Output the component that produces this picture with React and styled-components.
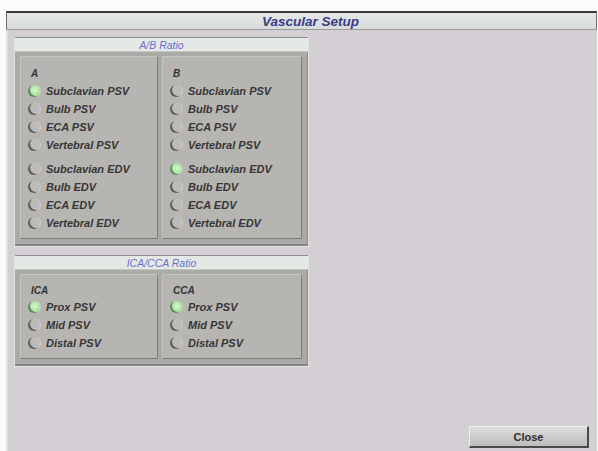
import React from 'react'
import styled, { createGlobalStyle } from 'styled-components'

const GlobalStyle = createGlobalStyle`
  html, body {
    margin: 0;
    padding: 0;
    background: #fbfbfb;
  }
  body {
    font-family: "Liberation Sans", Arial, sans-serif;
  }
`;

const Screen = styled.div`
  width: 598px;
  height: 451px;
  box-sizing: border-box;
  padding: 11px 1px 0 6px;
  display: flex;
  flex-direction: column;
  overflow: hidden;
`;

const TitleBar = styled.div`
  height: 19px;
  flex: none;
  box-sizing: border-box;
  background: linear-gradient(#e3e7e5, #d8dddb);
  border: 1px solid #6e6e6e;
  border-top: 2px solid #3c3c3c;
  border-bottom: 1px solid #9a9a9a;
  display: flex;
  align-items: center;
  justify-content: center;
  padding-left: 18px;
  font-size: 13.5px;
  font-weight: bold;
  font-style: italic;
  color: #383c8a;
`;

const Content = styled.div`
  flex: 1;
  background: #d3cfd4;
  border-left: 2px solid #e2dfe3;
  display: flex;
  flex-direction: column;
  padding: 7px 0 3px 6px;
  gap: 8px;
`;

const Group = styled.div`
  width: 295px;
  box-sizing: border-box;
  border: 1px solid #e4e2e4;
  border-top: none;
  display: flex;
  flex-direction: column;
`;

const GroupHeader = styled.div`
  height: 15px;
  box-sizing: border-box;
  background: #e5e9e6;
  border-top: 1px solid #8c8c8c;
  border-bottom: 1px solid #c4c6c4;
  display: flex;
  align-items: center;
  justify-content: center;
  font-size: 10.5px;
  font-style: italic;
  color: #6d6dcf;
`;

const GroupBody = styled.div`
  background: #aaaaa7;
  border-bottom: 2px solid #858583;
  border-right: 1px solid #8e8e8c;
  padding: 4px 5px 5px 5px;
  display: grid;
  grid-template-columns: 138px 1fr;
  gap: 4px;
`;

const Panel = styled.div`
  background: #b6b5b2;
  border: 1px solid #c6c5c2;
  border-right-color: #7d7d7b;
  border-bottom-color: #7d7d7b;
  padding: 7px 0 6px 7px;
  display: flex;
  flex-direction: column;
`;

const PanelLabel = styled.div`
  height: ${({ $short }) => ($short ? '16px' : '18px')};
  display: flex;
  align-items: center;
  padding-left: 3px;
  font-size: 10px;
  font-weight: bold;
  font-style: italic;
  color: #333;
`;

const Spacer = styled.div`
  height: 6px;
`;

const Option = styled.div`
  height: 18px;
  display: flex;
  align-items: center;
  gap: 6px;
  font-size: 11px;
  font-weight: bold;
  font-style: italic;
  color: #363636;
`;

const Radio = styled.span`
  width: 12px;
  height: 12px;
  flex: none;
  border-radius: 50%;
  background: ${({ $on }) =>
    $on ? 'radial-gradient(circle at 58% 45%, #d2f8ca, #98dc90 75%)' : '#bcbbb8'};
  box-shadow: inset 2px -1px 0.5px ${({ $on }) => ($on ? '#65866a' : '#5c5c5c')},
    1px 0 0 #cecdca;
`;

const Footer = styled.div`
  margin-top: auto;
  display: flex;
  justify-content: flex-end;
  padding-right: 8px;
`;

const CloseButton = styled.button`
  width: 120px;
  height: 22px;
  font-family: "Liberation Sans", Arial, sans-serif;
  font-size: 11px;
  font-weight: bold;
  color: #2e2e2e;
  background: linear-gradient(#dcdcdc, #bdbdbd);
  border: 1px solid #9c9c9c;
  border-right: 2px solid #4a4a4a;
  border-bottom: 2px solid #4a4a4a;
  border-top-color: #efefef;
  border-left-color: #efefef;
  padding: 0;
  cursor: pointer;
`;

const abColumns = ['A', 'B'];

const psvItems = ['Subclavian PSV', 'Bulb PSV', 'ECA PSV', 'Vertebral PSV'];
const edvItems = ['Subclavian EDV', 'Bulb EDV', 'ECA EDV', 'Vertebral EDV'];
const icaItems = ['Prox PSV', 'Mid PSV', 'Distal PSV'];

const RadioRow = ({ text, on }) => (
  <Option>
    <Radio $on={on} />
    {text}
  </Option>
);

const App = () => {
  // A has no EDV picked; B uses the subclavian EDV
  const abSelected = [['Subclavian PSV'], ['Subclavian EDV']];

  return (
    <>
      <GlobalStyle />
      <Screen>
        <TitleBar>Vascular Setup</TitleBar>
        <Content>
          <Group>
            <GroupHeader>A/B Ratio</GroupHeader>
            <GroupBody>
              {abColumns.map((label, i) => (
                <Panel key={label}>
                  <PanelLabel>{label}</PanelLabel>
                  {psvItems.map((t) => (
                    <RadioRow key={t} text={t} on={abSelected[i].includes(t)} />
                  ))}
                  <Spacer />
                  {edvItems.map((t) => (
                    <RadioRow key={t} text={t} on={abSelected[i].includes(t)} />
                  ))}
                </Panel>
              ))}
            </GroupBody>
          </Group>
          <Group>
            <GroupHeader>ICA/CCA Ratio</GroupHeader>
            <GroupBody>
              {['ICA', 'CCA'].map((label) => (
                <Panel key={label}>
                  <PanelLabel $short>{label}</PanelLabel>
                  {icaItems.map((t, j) => (
                    <RadioRow key={t} text={t} on={j === 0} />
                  ))}
                </Panel>
              ))}
            </GroupBody>
          </Group>
          <Footer>
            <CloseButton>Close</CloseButton>
          </Footer>
        </Content>
      </Screen>
    </>
  )
}

export default App
